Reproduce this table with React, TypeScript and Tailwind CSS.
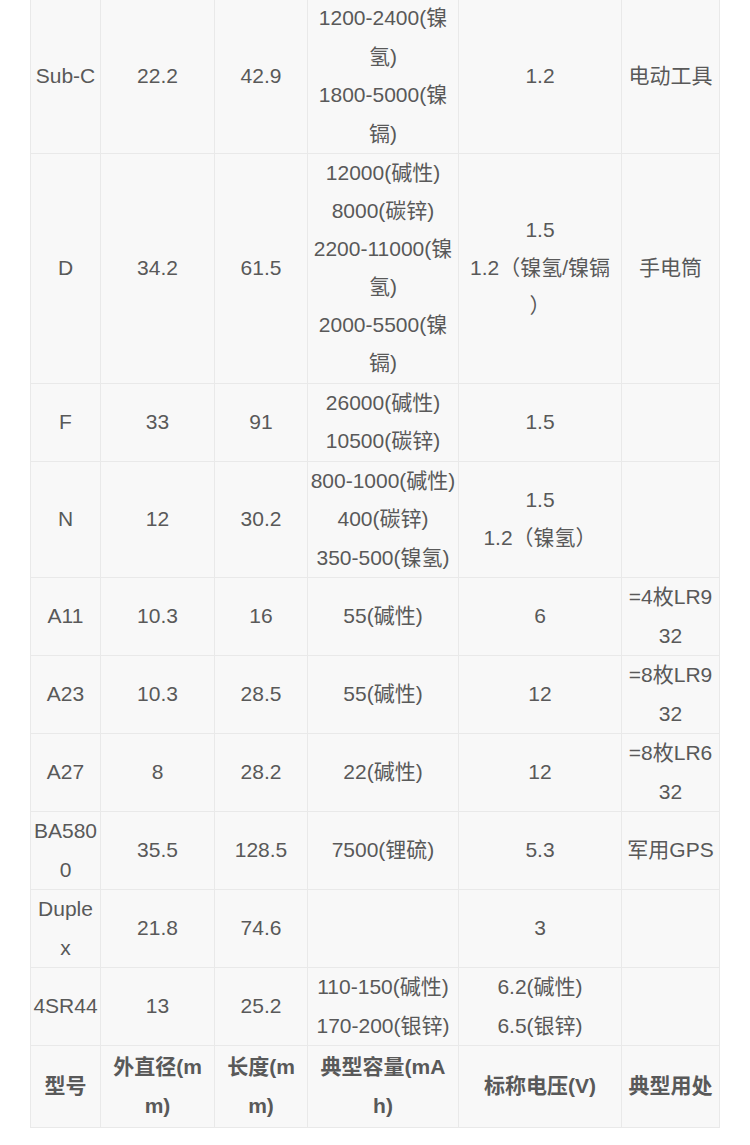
const COLS = [70, 114, 93, 151, 163, 98];

const ROWS: string[][][] = [
  [["Sub-C"], ["22.2"], ["42.9"], ["1200-2400(镍", "氢)", "1800-5000(镍", "镉)"], ["1.2"], ["电动工具"]],
  [
    ["D"],
    ["34.2"],
    ["61.5"],
    ["12000(碱性)", "8000(碳锌)", "2200-11000(镍", "氢)", "2000-5500(镍", "镉)"],
    ["1.5", "1.2（镍氢/镍镉", "）"],
    ["手电筒"],
  ],
  [["F"], ["33"], ["91"], ["26000(碱性)", "10500(碳锌)"], ["1.5"], []],
  [["N"], ["12"], ["30.2"], ["800-1000(碱性)", "400(碳锌)", "350-500(镍氢)"], ["1.5", "1.2（镍氢）"], []],
  [["A11"], ["10.3"], ["16"], ["55(碱性)"], ["6"], ["=4枚LR9", "32"]],
  [["A23"], ["10.3"], ["28.5"], ["55(碱性)"], ["12"], ["=8枚LR9", "32"]],
  [["A27"], ["8"], ["28.2"], ["22(碱性)"], ["12"], ["=8枚LR6", "32"]],
  [["BA580", "0"], ["35.5"], ["128.5"], ["7500(锂硫)"], ["5.3"], ["军用GPS"]],
  [["Duple", "x"], ["21.8"], ["74.6"], [], ["3"], []],
  [["4SR44"], ["13"], ["25.2"], ["110-150(碱性)", "170-200(银锌)"], ["6.2(碱性)", "6.5(银锌)"], []],
];

const HEADER: string[][] = [["型号"], ["外直径(m", "m)"], ["长度(m", "m)"], ["典型容量(mA", "h)"], ["标称电压(V)"], ["典型用处"]];

function Lines({ lines }: { lines: string[] }) {
  return (
    <>
      {lines.map((l, i) => (
        <div key={i} className="whitespace-nowrap">
          {l}
        </div>
      ))}
    </>
  );
}

export default function App() {
  return (
    <div className="min-h-[1145px] w-[750px] overflow-hidden bg-white font-['Liberation_Sans','Noto_Sans_CJK_SC',sans-serif] text-[21px] leading-[38.5px] text-[#595959]">
      <table className="-mt-[2px] ml-[30px] w-[690px] table-fixed border-collapse">
        <colgroup>
          {COLS.map((w, i) => (
            <col key={i} style={{ width: w }} />
          ))}
        </colgroup>
        <tbody>
          {ROWS.map((row, r) => (
            <tr key={r} className={r === 1 ? "leading-[38.1px]" : ""}>
              {row.map((cell, c) => (
                <td key={c} className="border border-[#e9e9e9] bg-[#f8f8f8] p-0 text-center align-middle">
                  <Lines lines={cell} />
                </td>
              ))}
            </tr>
          ))}
          <tr>
            {HEADER.map((cell, c) => (
              <td key={c} className="border border-[#e9e9e9] bg-[#f8f8f8] px-0 py-[2px] text-center align-middle font-bold">
                <Lines lines={cell} />
              </td>
            ))}
          </tr>
        </tbody>
      </table>
    </div>
  );
}
